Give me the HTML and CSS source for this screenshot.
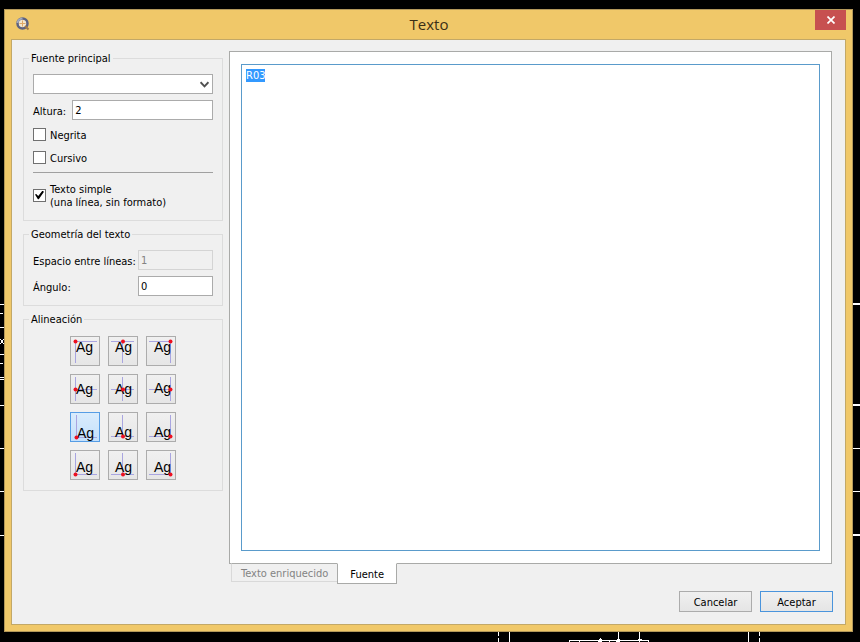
FILE: index.html
```html
<!DOCTYPE html>
<html lang="es">
<head>
<meta charset="utf-8">
<title>Texto</title>
<link rel="stylesheet" href="styles.css">
</head>
<body>
<svg class="drawing" viewBox="0 0 860 642" preserveAspectRatio="none" aria-hidden="true" shape-rendering="crispEdges">
  <g fill="none" stroke="#fff">
    <path d="M0 304.500H4M0 313.500H3M0 327.500H4M0 354.500H4M0 363.500H3M0 377.500H4M0 379.500H4M0 405.500H4M0 448.500H4M0 491.500H4M0 535.500H4M0 339L4 344M4 339L0 344"/>
    <path d="M852 448.500H860M852 491.500H860"/>
    <path stroke-width="2" d="M852 304H860M852 405H860M852 535H860"/>
    <path d="M509.500 631V642M618.500 631V642M639.500 631V642M748.500 631V642M569.500 642V640.500H648.500V642M579.500 640V642M609.500 640V642"/>
    <path stroke-dasharray="4 2" d="M498.500 632V642M759.500 632V642"/>
  </g>
  <g fill="#fff"><path d="M598 642v-2l2-2 2 2v2zM616 642v-2l2-2 2 2v2zM638 641h4v-2h-4z"/></g>
</svg>
<main class="window">
  <header class="titlebar">
    <svg class="app-icon" viewBox="0 0 16 16" aria-hidden="true">
      <circle cx="7.500" cy="7.500" r="5" fill="#f3e6cc" stroke="#5d6280" stroke-width="2.500"/>
      <path d="M2.500 7a5 5 0 0 1 5-4.500" fill="none" stroke="#a3a9bd" stroke-width="2"/>
      <path d="M7.500 4.500v6M4.500 7.500h6" stroke="#e0a765" stroke-width="1"/>
      <path d="M10 10l3.500 3.500" stroke="#a0794a" stroke-width="2"/>
    </svg>
    <h1 class="title">Texto</h1>
    <button class="close" type="button" aria-label="Cerrar">
      <svg viewBox="0 0 8 8" aria-hidden="true"><path d="M0.500 0.500L7.500 7.500M7.500 0.500L0.500 7.500" stroke="#fff" stroke-width="1.700"/></svg>
    </button>
  </header>
  <form class="client">
    <div class="columns">
      <div class="options">
        <fieldset class="group">
          <legend>Fuente principal</legend>
          <div class="rows">
            <div class="combo">
              <select class="field" aria-label="Fuente principal"><option></option></select>
              <svg class="arrow" viewBox="0 0 8 7" aria-hidden="true"><path d="M0.500 1L4 4.700L7.500 1" fill="none" stroke="#505050" stroke-width="1.700"/></svg>
            </div>
            <div class="row"><label for="altura">Altura:</label><input class="field" id="altura" type="text" value="2"></div>
            <label class="check"><input type="checkbox"><span>Negrita</span></label>
            <label class="check"><input type="checkbox"><span>Cursivo</span></label>
            <hr class="rule">
            <label class="check tall"><input type="checkbox" checked><span>Texto simple<br>(una línea, sin formato)</span></label>
          </div>
        </fieldset>
        <fieldset class="group">
          <legend>Geometría del texto</legend>
          <div class="rows">
            <div class="row split"><label for="espacio">Espacio entre líneas:</label><input class="field" id="espacio" type="text" value="1" disabled></div>
            <div class="row split"><label for="angulo">Ángulo:</label><input class="field" id="angulo" type="text" value="0"></div>
          </div>
        </fieldset>
        <fieldset class="group">
          <legend>Alineación</legend>
          <div class="anchors">
            <button type="button" class="anchor" aria-label="Arriba izquierda"><svg viewBox="0 0 28 28"><path d="M4.500 4V26M4 4.500H26"/><text x="5" y="15">Ag</text><circle cx="4.500" cy="4.500" r="2"/></svg></button>
            <button type="button" class="anchor" aria-label="Arriba centro"><svg viewBox="0 0 28 28"><path d="M13.500 4V26M2 4.500H25"/><text x="6" y="15">Ag</text><circle cx="14" cy="4.500" r="2"/></svg></button>
            <button type="button" class="anchor" aria-label="Arriba derecha"><svg viewBox="0 0 28 28"><path d="M23.500 4V26M2 4.500H24"/><text x="7" y="15">Ag</text><circle cx="23.500" cy="4.500" r="2"/></svg></button>
            <button type="button" class="anchor" aria-label="Medio izquierda"><svg viewBox="0 0 28 28"><path d="M4.500 2V26M4 14.500H26"/><text x="5" y="19">Ag</text><circle cx="4.500" cy="14.500" r="2"/></svg></button>
            <button type="button" class="anchor" aria-label="Medio centro"><svg viewBox="0 0 28 28"><path d="M13.500 2V26M2 14.500H25"/><text x="6" y="19">Ag</text><circle cx="14" cy="14.500" r="2"/></svg></button>
            <button type="button" class="anchor" aria-label="Medio derecha"><svg viewBox="0 0 28 28"><path d="M23.500 2V26M2 14.500H24"/><text x="7" y="18">Ag</text><circle cx="23.500" cy="14.500" r="2"/></svg></button>
            <button type="button" class="anchor" aria-pressed="true" aria-label="Base izquierda"><svg viewBox="0 0 28 28"><path d="M5.500 2V24M5 24.500H26"/><text x="6" y="25">Ag</text><circle cx="5.500" cy="24.500" r="2"/></svg></button>
            <button type="button" class="anchor" aria-label="Base centro"><svg viewBox="0 0 28 28"><path d="M13.500 2V24M2 23.500H25"/><text x="6" y="24">Ag</text><circle cx="14" cy="23.500" r="2"/></svg></button>
            <button type="button" class="anchor" aria-label="Base derecha"><svg viewBox="0 0 28 28"><path d="M23.500 2V24M2 23.500H24"/><text x="7" y="24">Ag</text><circle cx="23.500" cy="23.500" r="2"/></svg></button>
            <button type="button" class="anchor" aria-label="Abajo izquierda"><svg viewBox="0 0 28 28"><path d="M4.500 2V24M4 23.500H26"/><text x="5" y="21">Ag</text><circle cx="4.500" cy="23.500" r="2"/></svg></button>
            <button type="button" class="anchor" aria-label="Abajo centro"><svg viewBox="0 0 28 28"><path d="M13.500 2V24M2 23.500H25"/><text x="6" y="21">Ag</text><circle cx="14" cy="23.500" r="2"/></svg></button>
            <button type="button" class="anchor" aria-label="Abajo derecha"><svg viewBox="0 0 28 28"><path d="M23.500 2V24M2 23.500H24"/><text x="7" y="21">Ag</text><circle cx="23.500" cy="23.500" r="2"/></svg></button>
          </div>
        </fieldset>
      </div>
      <section class="editor">
        <div class="page"><textarea id="fuente" aria-label="Fuente" spellcheck="false" autofocus>R03</textarea></div>
        <div class="tabs" role="tablist">
          <button type="button" class="tab" role="tab" aria-selected="false" disabled>Texto enriquecido</button>
          <button type="button" class="tab" role="tab" aria-selected="true">Fuente</button>
        </div>
      </section>
    </div>
    <footer class="actions">
      <button type="button" class="action">Cancelar</button>
      <button type="submit" class="action default">Aceptar</button>
    </footer>
  </form>
</main>
<script src="script.js"></script>
</body>
</html>
```
FILE: styles.css
```css
* { box-sizing: border-box; }

body {
  margin: 0;
  min-height: 100vh;
  padding: 9px 7px 10px 4px;
  display: flex;
  background: #000;
  color: #000;
  font: 11px/13px "DejaVu Sans Condensed", "DejaVu Sans", sans-serif;
}

button, input, select, textarea { font: inherit; color: inherit; margin: 0; }

.drawing {
  position: absolute;
  inset: 0;
  width: 100%;
  height: 100%;
}

.window {
  position: relative;
  flex: 1;
  display: flex;
  flex-direction: column;
  padding: 0 6px 6px;
  border: 1px solid #b3985a;
  background: #f0c869;
}

.titlebar {
  display: grid;
  grid-template-columns: 32px 1fr 31px;
  height: 29px;
}
.app-icon { width: 16px; height: 16px; margin: 6px 4px; }
.title {
  margin: 0;
  font: 15px/29px "Open Sans", sans-serif;
  text-align: center;
  color: #3a2f16;
}
.close {
  width: 31px;
  height: 20px;
  padding: 0;
  border: 0;
  background: #c75050;
  display: grid;
  place-items: center;
}
.close svg { width: 8px; height: 8px; }

.client {
  flex: 1;
  display: flex;
  flex-direction: column;
  gap: 7px;
  padding: 11px 12px 12px 11px;
  border: 1px solid #c2a867;
  background: #f0f0f0;
}

.columns {
  flex: 1;
  display: grid;
  grid-template-columns: 200px 1fr;
  gap: 6px;
  padding-right: 1px;
}

.options { display: flex; flex-direction: column; gap: 6px; }

.group {
  margin: 0;
  min-width: 0;
  padding: 9px;
  border: 1px solid #dcdcdc;
}
.group legend {
  margin-left: -4px;
  padding: 2px 2px 0;
  line-height: 12px;
}

.rows { display: flex; flex-direction: column; gap: 6px; }

.row { display: flex; align-items: center; gap: 6px; }
.row.split { display: grid; grid-template-columns: 1fr 75px; gap: 0; white-space: nowrap; }
.row label, .check span { padding-top: 2px; }

.field {
  flex: 1;
  min-width: 0;
  width: 100%;
  height: 20px;
  padding: 1px 2px 0;
  border: 1px solid #ababab;
  border-radius: 0;
  background: #fff;
  outline: 0;
}
.field:disabled { border-color: #d4d4d4; background: #f0f0f0; color: #838383; }

.combo { position: relative; display: flex; }
.combo select { appearance: none; }
.arrow { position: absolute; right: 4px; top: 7px; width: 9px; height: 8px; }

.check { display: flex; align-items: center; gap: 4px; height: 17px; }
.check.tall { height: 32px; }
.check input {
  appearance: none;
  flex: none;
  width: 13px;
  height: 13px;
  border: 1px solid #707070;
  background: #fff;
}
.check input:checked { display: grid; place-items: center; }
.check input:checked::before {
  content: "";
  width: 9px;
  height: 9px;
  background: #000;
  clip-path: polygon(0 45%, 14% 38%, 36% 62%, 82% 2%, 100% 14%, 42% 98%, 32% 98%);
}

.rule { width: 100%; margin: 0; border: 0; border-top: 1px solid #a0a0a0; }

.anchors {
  display: grid;
  grid-template-columns: repeat(3, 30px);
  gap: 8px;
  justify-content: center;
  padding: 1px 0;
}
.anchor {
  height: 30px;
  padding: 0;
  border: 1px solid #acacac;
  background: linear-gradient(#f0f0f0, #e6e6e6);
}
.anchor[aria-pressed="true"] { border-color: #569de5; background: linear-gradient(#daecfc, #c4e0fc); }
.anchor svg { display: block; width: 28px; height: 28px; }
.anchor path { stroke: #a9a5e0; }
.anchor text { font: 14px "Liberation Sans", sans-serif; fill: #000; }
.anchor circle { fill: #ed1020; }

.editor { display: flex; flex-direction: column; }
.page {
  flex: 1;
  display: flex;
  padding: 12px 11px;
  border: 1px solid #a9aaa8;
  background: #fff;
}
.page textarea {
  flex: 1;
  padding: 4px;
  border: 1px solid #5a9bcb;
  outline: 0;
  resize: none;
  background: #fff;
}
.page textarea::selection { background: #3399ff; color: #fff; }

.tabs {
  display: flex;
  align-items: flex-start;
  height: 21px;
  margin: -1px 2px 0;
}
.tab {
  height: 19px;
  padding: 1px 9px 0;
  border: 1px solid #d9d9d9;
  border-top-color: #a9aaa8;
  border-right: 0;
  background: #f0f0f0;
  white-space: nowrap;
}
.tab:disabled { color: #838383; }
.tab[aria-selected="true"] {
  height: 21px;
  padding: 1px 12px 0;
  border: 1px solid #a9aaa8;
  border-top-color: #fff;
  background: #fff;
}

.actions { display: flex; justify-content: flex-end; gap: 8px; }
.action {
  width: 73px;
  height: 21px;
  padding: 1px 0 0;
  border: 1px solid #acacac;
  background: linear-gradient(#f0f0f0, #e5e5e5);
}
.action.default { border-color: #4a94dc; }
```
FILE: script.js
```js
const source = document.getElementById("fuente");
source.focus();
source.select();
```
